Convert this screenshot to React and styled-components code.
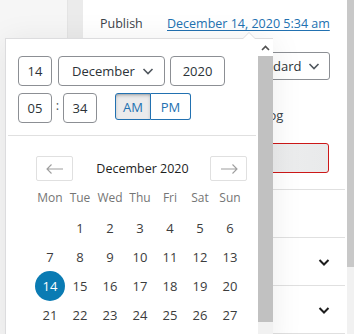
import React from 'react';
import styled, { createGlobalStyle } from 'styled-components';

const GlobalStyle = createGlobalStyle`
  html, body {
    margin: 0;
    padding: 0;
  }
  body {
    font-family: 'Open Sans', 'Noto Sans', sans-serif;
    font-size: 13px;
    color: #1e1e1e;
    overflow: hidden;
  }
`;

const Screen = styled.div`
  position: relative;
  display: flex;
  width: 354px;
  height: 334px;
  overflow: hidden;
  background: #f6f7f7;
`;

const Canvas = styled.div`
  width: 67px;
  background: #f6f6f6;
`;

const Gutter = styled.div`
  width: 16px;
  background: #ebebeb;
  border-left: 1px solid #e4e4e4;
  box-sizing: border-box;
`;

const Sidebar = styled.div`
  flex: 1;
  display: flex;
  flex-direction: column;
  background: #fff;
  padding-right: 2px;
`;

const PageScroll = styled.div`
  width: 7px;
  display: flex;
  flex-direction: column;
  background: #f1f1f1;
  &::before {
    content: '';
    height: 267px;
    background: #c8c8c8;
  }
`;

const StatusPanel = styled.div`
  display: flex;
  flex-direction: column;
  padding: 14px 15px 16px 17px;
  border-bottom: 1px solid #e0e0e0;
`;

const Row = styled.div`
  display: flex;
  align-items: center;
  justify-content: ${(p) => (p.$end ? 'flex-end' : 'flex-start')};
  min-height: ${(p) => p.$h || 18}px;
  margin-bottom: ${(p) => p.$mb || 0}px;
`;

const Label = styled.span`
  width: 67px;
  color: #3c434a;
  font-size: 12.5px;
`;

const DateLink = styled.a`
  color: #2271b1;
  font-size: 12.5px;
  text-decoration: underline;
  text-underline-offset: 2px;
`;

const FormatSelect = styled.div`
  width: 94px;
  height: 28px;
  box-sizing: border-box;
  border: 1px solid #8c8f94;
  border-radius: 3px;
  display: flex;
  align-items: center;
  justify-content: space-between;
  padding: 0 8px 0 9px;
  font-size: 13px;
  color: #2c3338;
`;

const Check = styled.span`
  width: 14px;
  height: 14px;
  border: 1px solid #8c8f94;
  border-radius: 2px;
  margin-right: 8px;
`;

const StickyText = styled.span`
  font-size: 13px;
  line-height: 16px;
  color: #3c434a;
`;

const TrashButton = styled.div`
  height: 30px;
  box-sizing: border-box;
  border: 1px solid #cc1818;
  border-radius: 3px;
  background: linear-gradient(90deg, #f6f7f7, #e9eaeb);
  color: #cc1818;
  display: flex;
  align-items: center;
  justify-content: center;
  font-size: 13px;
  margin-right: 1px;
`;

const Panel = styled.div`
  height: ${(p) => p.$h}px;
  display: flex;
  align-items: center;
  justify-content: flex-end;
  padding-right: 14px;
  border-bottom: 1px solid #e0e0e0;
  color: #1e1e1e;
`;

/* popover */

const Popover = styled.div`
  position: absolute;
  left: 5px;
  top: 38px;
  width: 268px;
  height: 310px;
  box-sizing: border-box;
  display: flex;
  background: #fff;
  border: 1px solid #dcdcde;
  border-right: none;
  box-shadow: 0 3px 30px rgba(0, 0, 0, 0.08);
  &::before,
  &::after {
    content: '';
    position: absolute;
    left: 236px;
    border: 7px solid transparent;
    border-top: none;
  }
  &::before {
    top: -7px;
    border-bottom-color: #dcdcde;
  }
  &::after {
    top: -6px;
    border-bottom-color: #fff;
  }
`;

const PopBody = styled.div`
  flex: 1;
  display: flex;
  flex-direction: column;
  padding: 17px 2px 0 2px;
`;

const PopScroll = styled.div`
  width: 15px;
  display: flex;
  flex-direction: column;
  align-items: center;
  background: #f1f1f1;
`;

const ScrollArrow = styled.div`
  height: 17px;
  width: 100%;
  background: #fff;
  display: flex;
  align-items: center;
  justify-content: center;
`;

const ScrollThumb = styled.div`
  width: 100%;
  height: 266px;
  background: #c1c1c1;
`;

const Fields = styled.div`
  display: flex;
  flex-direction: column;
  gap: 7px;
  padding: 0 10px;
`;

const FieldRow = styled.div`
  display: flex;
  align-items: center;
`;

const Box = styled.div`
  width: ${(p) => p.$w}px;
  height: 30px;
  box-sizing: border-box;
  border: 1px solid #8c8f94;
  border-radius: 4px;
  display: flex;
  align-items: center;
  justify-content: center;
  margin-right: ${(p) => p.$mr || 0}px;
  font-size: 13px;
  color: #2c3338;
`;

const MonthBox = styled(Box)`
  justify-content: space-between;
  padding: 0 9px 0 13px;
`;

const Colon = styled.span`
  width: 11px;
  text-align: center;
  align-self: flex-start;
  margin-top: 3px;
  color: #50575e;
`;

const Toggle = styled.div`
  display: flex;
  margin-left: 18px;
  height: 27px;
  align-self: flex-start;
`;

const ToggleBtn = styled.div`
  width: ${(p) => p.$w}px;
  box-sizing: border-box;
  border: 1px solid #2271b1;
  border-radius: ${(p) => (p.$left ? '3px 0 0 3px' : '0 3px 3px 0')};
  border-left-width: ${(p) => (p.$left ? 1 : 0)}px;
  background: ${(p) => (p.$on ? '#ebebec' : '#fff')};
  box-shadow: ${(p) => (p.$on ? 'inset 0 2px 5px -3px #2c3338' : 'none')};
  color: #2271b1;
  display: flex;
  align-items: center;
  justify-content: center;
  font-size: 13px;
`;

const Divider = styled.div`
  height: 1px;
  background: #e0e0e0;
  margin: 12px 0 0;
`;

const Calendar = styled.div`
  display: flex;
  flex-direction: column;
  padding: 20px 0 0 28px;
  width: 210px;
`;

const CalHead = styled.div`
  display: flex;
  align-items: center;
  justify-content: space-between;
  height: 25px;
  margin-right: -1px;
`;

const NavBtn = styled.div`
  width: 37px;
  height: 25px;
  box-sizing: border-box;
  border: 1px solid #e0e0e0;
  border-radius: 2px;
  display: flex;
  align-items: center;
  justify-content: center;
`;

const Title = styled.span`
  font-size: 12.5px;
  color: #1e1e1e;
  margin-left: 2px;
`;

const Grid = styled.div`
  display: grid;
  grid-template-columns: repeat(7, 30px);
  grid-auto-rows: 29px;
  margin-top: 3px;
  margin-left: -1px;
`;

const Cell = styled.div`
  display: flex;
  align-items: center;
  justify-content: center;
  font-size: ${(p) => (p.$head ? 12 : 13)}px;
  color: ${(p) => (p.$head ? '#757575' : '#3c3c3c')};
  margin-bottom: ${(p) => (p.$head ? 2 : 0)}px;
`;

const Selected = styled.span`
  width: 30px;
  height: 30px;
  border-radius: 50%;
  background: #0a7bb3;
  color: #fff;
  display: flex;
  align-items: center;
  justify-content: center;
`;

const Chevron = ({ size = 14, stroke = '#1e1e1e', width = 2 }) => (
  <svg width={size} height={size} viewBox="0 0 14 14">
    <path d="M2.5 5l4.5 4.5L11.5 5" fill="none" stroke={stroke} strokeWidth={width} />
  </svg>
);

const Arrow = ({ dir }) => (
  <svg width="18" height="10" viewBox="0 0 18 10">
    <path
      d={dir === 'left' ? 'M1 5h16M5.5 0.5L1 5l4.5 4.5' : 'M1 5h16M12.5 0.5L17 5l-4.5 4.5'}
      fill="none"
      stroke="#9e9e9e"
      strokeWidth="1.1"
    />
  </svg>
);

const weekdays = ['Mon', 'Tue', 'Wed', 'Thu', 'Fri', 'Sat', 'Sun'];
const days = ['', ...Array.from({ length: 27 }, (_, i) => i + 1)];

export default function App() {
  return (
    <>
      <GlobalStyle />
      <Screen>
        <Canvas />
        <Gutter />
        <Sidebar>
          <StatusPanel>
            <Row $mb={20}>
              <Label>Publish</Label>
              <DateLink>December 14, 2020 5:34 am</DateLink>
            </Row>
            <Row $h={28} $mb={26} $end>
              <FormatSelect>
                Standard
                <Chevron stroke="#50575e" width={1.6} />
              </FormatSelect>
            </Row>
            <Row $mb={19}>
              <Check />
              <StickyText>Stick to the top of the blog</StickyText>
            </Row>
            <TrashButton>Move to trash</TrashButton>
          </StatusPanel>
          <Panel $h={47} />
          <Panel $h={47}>
            <Chevron />
          </Panel>
          <Panel $h={47}>
            <Chevron />
          </Panel>
        </Sidebar>
        <PageScroll />

        <Popover>
          <PopBody>
            <Fields>
              <FieldRow>
                <Box $w={34} $mr={6}>14</Box>
                <MonthBox $w={107} $mr={5}>
                  December
                  <Chevron stroke="#50575e" width={1.6} />
                </MonthBox>
                <Box $w={55}>2020</Box>
              </FieldRow>
              <FieldRow>
                <Box $w={34}>05</Box>
                <Colon>:</Colon>
                <Box $w={34}>34</Box>
                <Toggle>
                  <ToggleBtn $w={36} $left $on>AM</ToggleBtn>
                  <ToggleBtn $w={40}>PM</ToggleBtn>
                </Toggle>
              </FieldRow>
            </Fields>
            <Divider />
            <Calendar>
              <CalHead>
                <NavBtn>
                  <Arrow dir="left" />
                </NavBtn>
                <Title>December 2020</Title>
                <NavBtn>
                  <Arrow dir="right" />
                </NavBtn>
              </CalHead>
              <Grid>
                {weekdays.map((d) => (
                  <Cell key={d} $head>{d}</Cell>
                ))}
                {days.map((d, i) => (
                  <Cell key={i}>{d === 14 ? <Selected>14</Selected> : d}</Cell>
                ))}
              </Grid>
            </Calendar>
          </PopBody>
          <PopScroll>
            <ScrollArrow>
              <svg width="9" height="6" viewBox="0 0 9 6">
                <path d="M1 5l3.5-3.5L8 5" fill="none" stroke="#505050" strokeWidth="1.6" />
              </svg>
            </ScrollArrow>
            <ScrollThumb />
          </PopScroll>
        </Popover>
      </Screen>
    </>
  );
}
